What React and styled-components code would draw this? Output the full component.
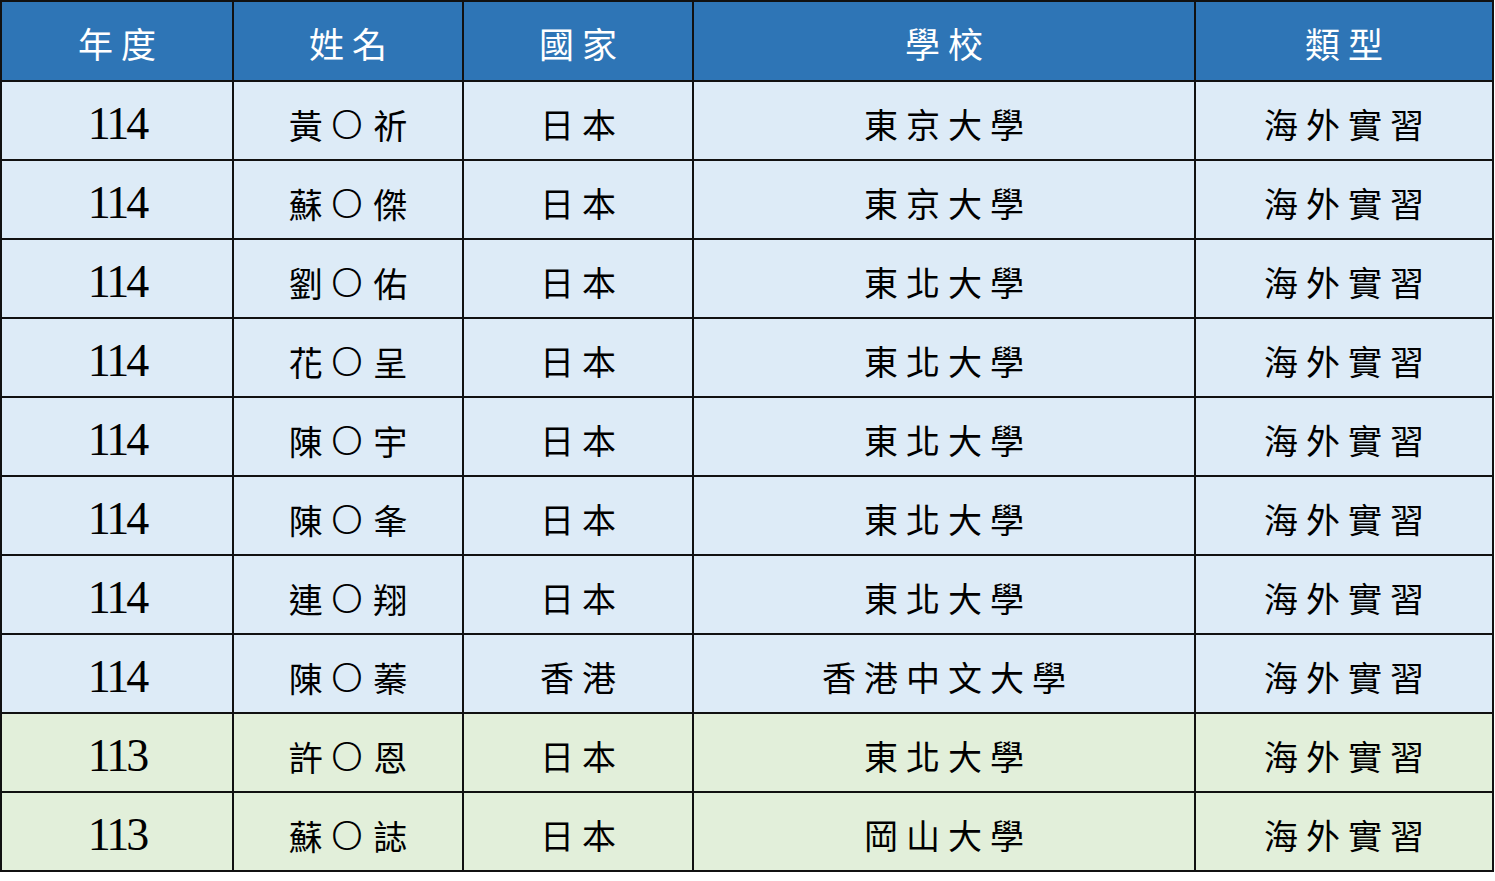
import React from "react";
import styled, { createGlobalStyle } from "styled-components";

const GlobalStyle = createGlobalStyle`
  html, body {
    margin: 0;
    padding: 0;
    background: #ffffff;
  }
`;

const Table = styled.table`
  width: 1492px;
  border-collapse: collapse;
  table-layout: fixed;
  font-family: "Liberation Serif", "Noto Sans CJK TC", serif;
  color: #000;
`;

const HeadCell = styled.th`
  height: 80px;
  box-sizing: border-box;
  padding: 2px 0 0 8px;
  border: 2px solid #111;
  background: #2e75b6;
  color: #fff;
  font-family: "Noto Sans CJK TC", sans-serif;
  font-weight: 400;
  font-size: 35px;
  letter-spacing: 8px;
  text-align: center;
  vertical-align: middle;
  line-height: 1;
`;

const Row = styled.tr`
  background: ${(p) => (p.$year === "113" ? "#e2efda" : "#ddebf7")};
`;

const Cell = styled.td`
  height: 79px;
  padding: 6px 0 0 ${(p) => (p.$num ? "0" : "8px")};
  box-sizing: border-box;
  border: 2px solid #111;
  text-align: center;
  vertical-align: middle;
  font-family: ${(p) =>
    p.$num ? `"Liberation Serif", serif` : `"Noto Sans CJK TC", sans-serif`};
  font-size: ${(p) => (p.$num ? "46px" : "34px")};
  letter-spacing: ${(p) => (p.$num ? "-3px" : "8px")};
  font-weight: 400;
  line-height: 1;
`;

const Mask = styled.span`
  font-family: "Lato", "Liberation Sans", sans-serif;
  font-size: 41px;
  font-weight: 300;
  letter-spacing: 10px;
`;

const columns = [
  { title: "年度", width: 232 },
  { title: "姓名", width: 230 },
  { title: "國家", width: 230 },
  { title: "學校", width: 502 },
  { title: "類型", width: 298 },
];

const rows = [
  ["114", "黃Ｏ祈", "日本", "東京大學", "海外實習"],
  ["114", "蘇Ｏ傑", "日本", "東京大學", "海外實習"],
  ["114", "劉Ｏ佑", "日本", "東北大學", "海外實習"],
  ["114", "花Ｏ呈", "日本", "東北大學", "海外實習"],
  ["114", "陳Ｏ宇", "日本", "東北大學", "海外實習"],
  ["114", "陳Ｏ夆", "日本", "東北大學", "海外實習"],
  ["114", "連Ｏ翔", "日本", "東北大學", "海外實習"],
  ["114", "陳Ｏ蓁", "香港", "香港中文大學", "海外實習"],
  ["113", "許Ｏ恩", "日本", "東北大學", "海外實習"],
  ["113", "蘇Ｏ誌", "日本", "岡山大學", "海外實習"],
];

function Name({ value }) {
  const [first, rest] = value.split("Ｏ");
  return (
    <>
      {first}
      <Mask>O</Mask>
      {rest}
    </>
  );
}

export default function App() {
  return (
    <>
      <GlobalStyle />
      <Table>
        <colgroup>
          {columns.map((c) => (
            <col key={c.title} style={{ width: c.width }} />
          ))}
        </colgroup>
        <thead>
          <tr>
            {columns.map((c) => (
              <HeadCell key={c.title}>{c.title}</HeadCell>
            ))}
          </tr>
        </thead>
        <tbody>
          {rows.map((r, i) => (
            <Row key={i} $year={r[0]}>
              {r.map((v, j) => (
                <Cell key={j} $num={j === 0}>
                  {j === 1 ? <Name value={v} /> : v}
                </Cell>
              ))}
            </Row>
          ))}
        </tbody>
      </Table>
    </>
  );
}
